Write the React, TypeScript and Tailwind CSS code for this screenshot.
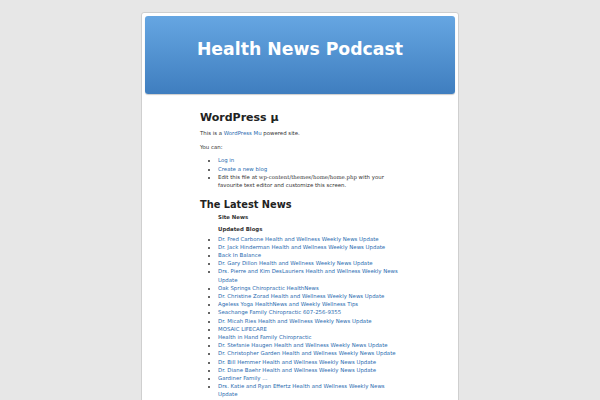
import React from 'react';

const blogs: string[] = [
    'Dr. Fred Carbone Health and Wellness Weekly News Update',
    'Dr. Jack Hinderman Health and Wellness Weekly News Update',
    'Back In Balance',
    'Dr. Gary Dillon Health and Wellness Weekly News Update',
    'Drs. Pierre and Kim DesLauriers Health and Wellness Weekly News Update',
    'Oak Springs Chiropractic HealthNews',
    'Dr. Christine Zorad Health and Wellness Weekly News Update',
    'Ageless Yoga HealthNews and Weekly Wellness Tips',
    'Seachange Family Chiropractic 607-256-9355',
    'Dr. Micah Ries Health and Wellness Weekly News Update',
    'MOSAIC LIFECARE',
    'Health in Hand Family Chiropractic',
    'Dr. Stefanie Haugen Health and Wellness Weekly News Update',
    'Dr. Christopher Garden Health and Wellness Weekly News Update',
    'Dr. Bill Hemmer Health and Wellness Weekly News Update',
    'Dr. Diane Baehr Health and Wellness Weekly News Update',
    'Gardiner Family ...',
    'Drs. Katie and Ryan Effertz Health and Wellness Weekly News Update',
];

export default function App() {
    return (
        <div className="min-h-[400px] bg-[#e7e7e7] pt-3 font-['DejaVu_Sans',sans-serif] text-[#333]">
            <div className="mx-auto w-[318px] rounded-[3px] border border-[#cfcfcf] bg-white p-[3px]">
                {/* Header */}
                <div className="flex h-[78px] justify-center rounded-[3px] bg-gradient-to-b from-[#66a6e2] to-[#3f7ebf] pt-[21px] shadow-[0_1px_1px_rgba(0,0,0,0.2)]">
                    <h1 className="text-[17.3px] font-bold leading-[24px] text-white">Health News Podcast</h1>
                </div>

                {/* Content */}
                <div className="ml-[55px] w-[204px] pt-[17px] pb-4 text-[5.4px] leading-[8.2px]">
                    <h2 className="text-[11px] font-bold leading-[14px] text-[#222]">WordPress µ</h2>
                    <p className="mt-[4px]">
                        This is a <a className="text-[#2a6cb0]">WordPress Mu</a> powered site.
                    </p>
                    <p className="mt-[6px]">You can:</p>
                    <ul className="mt-[5px] list-disc pl-[18px]">
                        <li><a className="text-[#2a6cb0]">Log in</a></li>
                        <li><a className="text-[#2a6cb0]">Create a new blog</a></li>
                        <li>Edit this file at <span className="font-['DejaVu_Serif',serif] leading-[8.2px]">wp-content/themes/home/home.php</span> with your favourite text editor and customize this screen.</li>
                    </ul>

                    <h2 className="mt-[10px] text-[9.8px] font-bold leading-[12px] text-[#222]">The Latest News</h2>
                    <div className="mt-[2px] pl-[18px]">
                        <h3 className="font-bold">Site News</h3>
                        <h3 className="mt-[4px] font-bold">Updated Blogs</h3>
                        <ul className="mt-[1px] list-disc">
                            {blogs.map((t) => (
                                <li key={t}><a className="text-[#2a6cb0]">{t}</a></li>
                            ))}
                        </ul>
                    </div>
                </div>
            </div>
        </div>
    );
}
